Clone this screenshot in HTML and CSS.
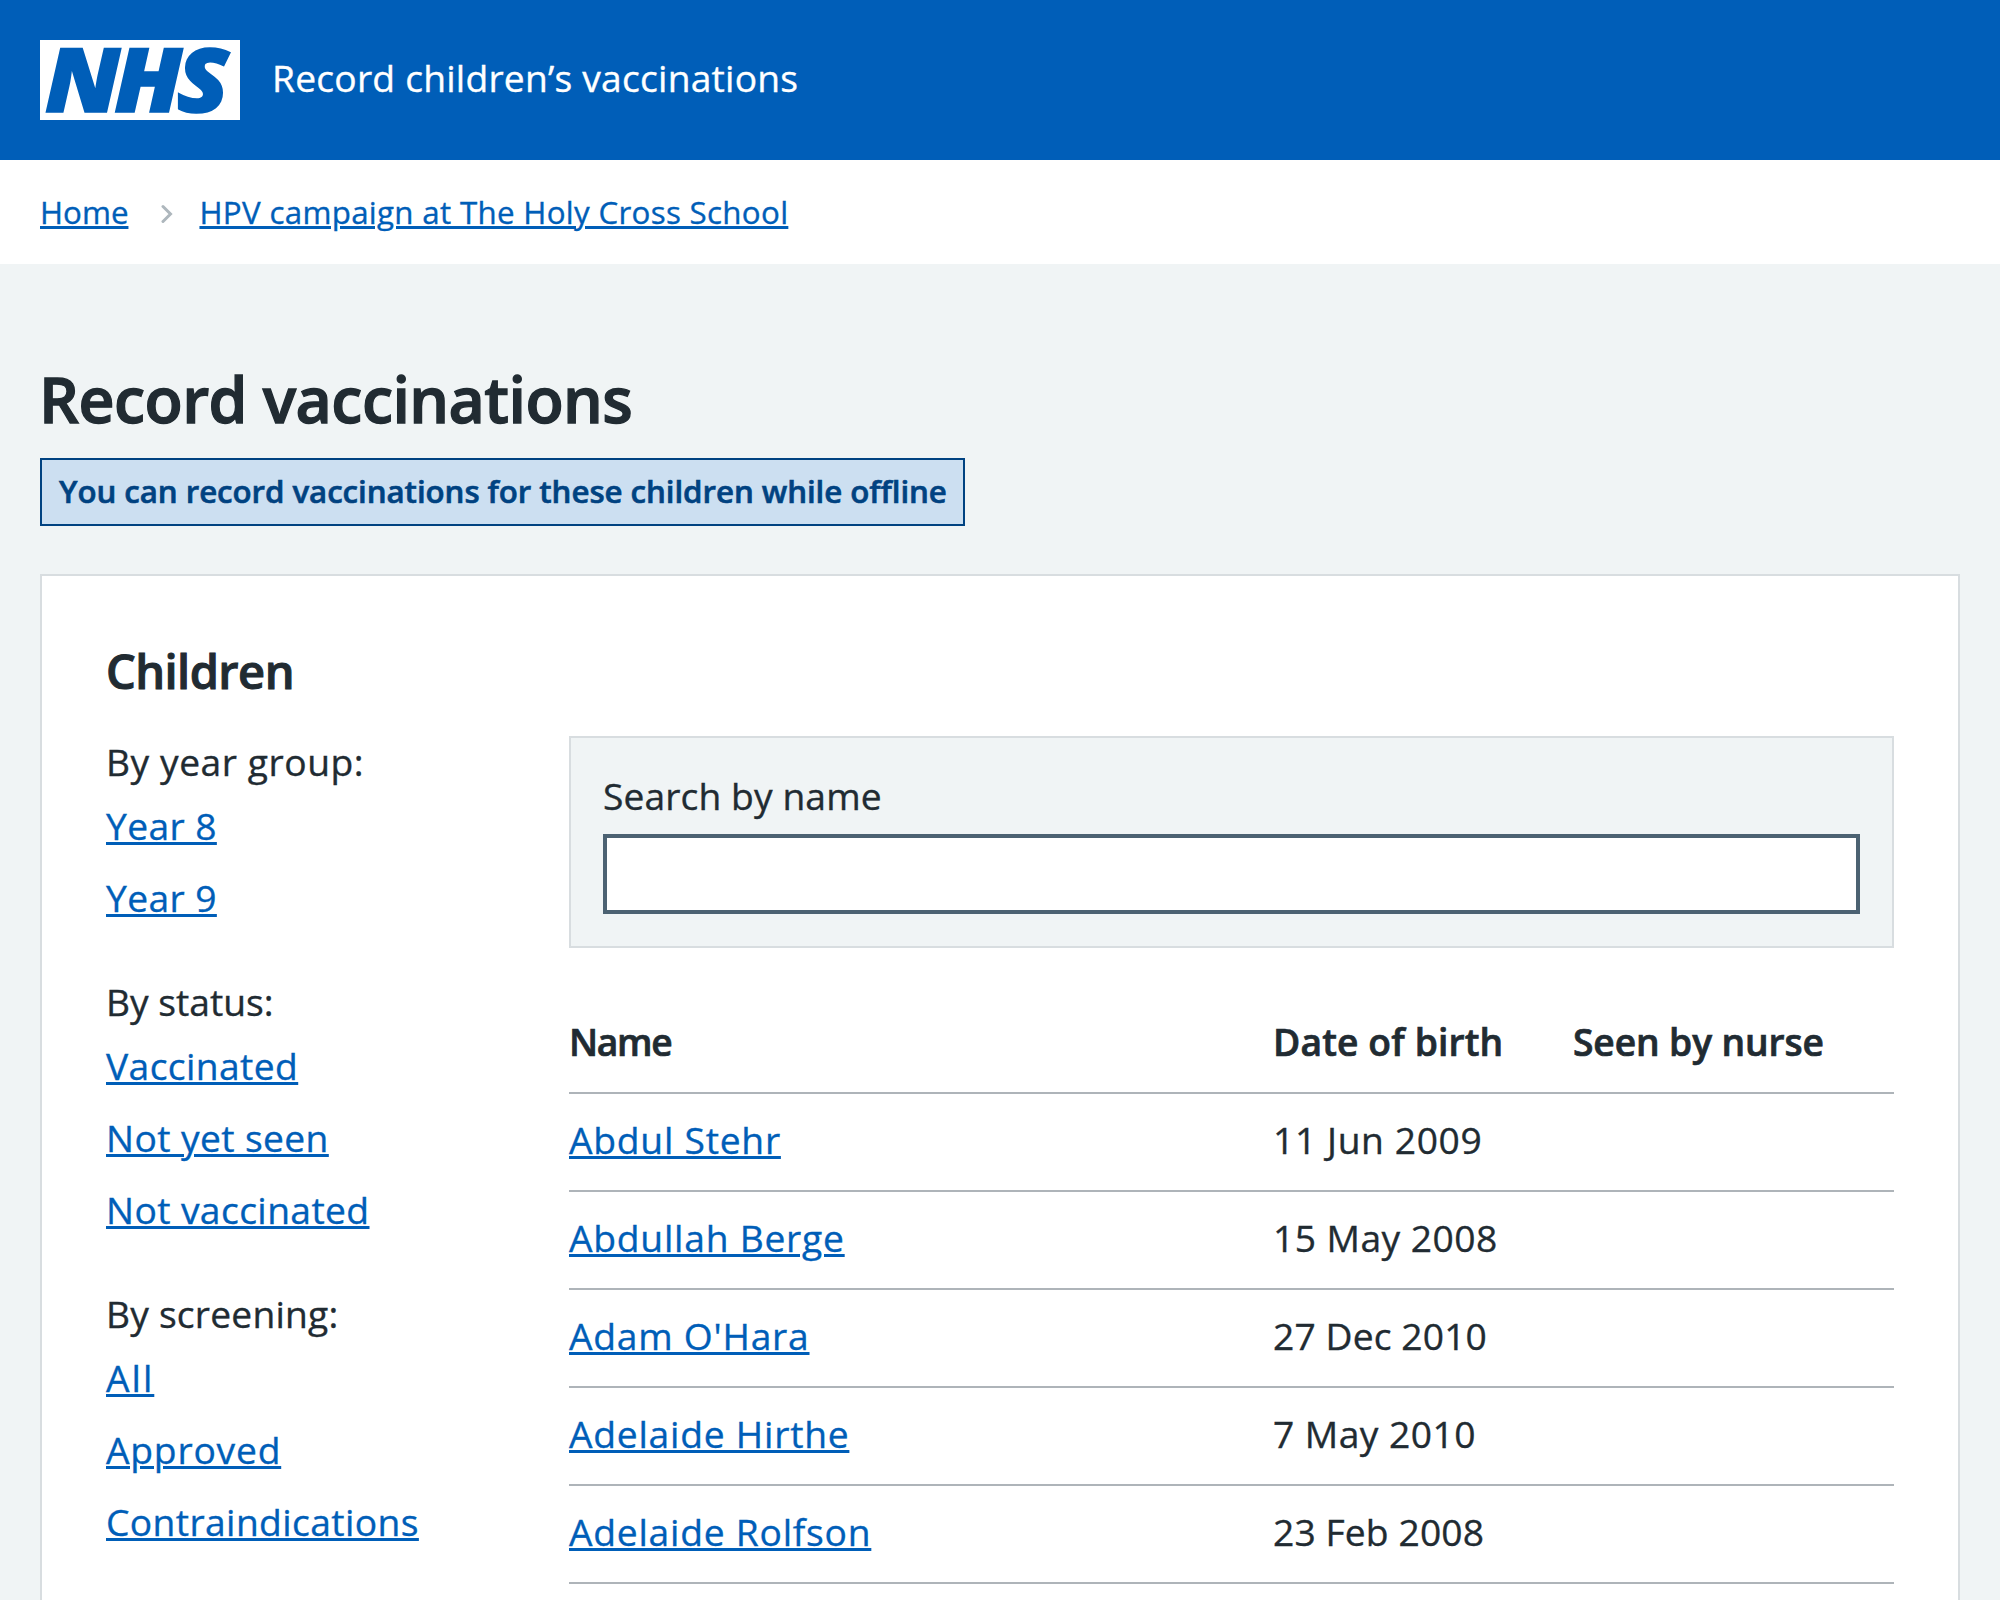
FILE: index.html
```html
<!DOCTYPE html>
<html lang="en">
<head>
<meta charset="utf-8">
<title>Record vaccinations</title>
<link rel="stylesheet" href="styles.css">
</head>
<body>
<header class="header">
  <svg class="logo" width="200" height="80" viewBox="0 0 200 80" role="img" aria-label="NHS">
    <rect width="200" height="80" fill="#fff"/>
    <text class="logo-text" x="4.6 69.3 127.8" y="72" transform="scale(1.07 1)">NHS</text>
  </svg>
  <span class="service-name">Record children’s vaccinations</span>
</header>
<nav class="breadcrumb">
  <a class="link" href="#">Home</a>
  <svg class="chevron" width="12" height="20" viewBox="0 0 12 20"><path d="M2 2.5 9.5 10 2 17.5"/></svg>
  <a class="link crumb-current" href="#">HPV campaign at The Holy Cross School</a>
</nav>
<main class="main">
  <h1 class="title">Record vaccinations</h1>
  <strong class="tag">You can record vaccinations for these children while offline</strong>
  <section class="card">
    <h2 class="card-title">Children</h2>
    <div class="columns">
      <aside class="filters">
        <div class="filter">
          <p class="filter-label group-year">By year group:</p>
          <ul class="filter-list">
            <li><a class="link" href="#">Year 8</a></li>
            <li><a class="link" href="#">Year 9</a></li>
          </ul>
        </div>
        <div class="filter">
          <p class="filter-label">By status:</p>
          <ul class="filter-list">
            <li><a class="link" href="#">Vaccinated</a></li>
            <li><a class="link" href="#">Not yet seen</a></li>
            <li><a class="link" href="#">Not vaccinated</a></li>
          </ul>
        </div>
        <div class="filter">
          <p class="filter-label group-screening">By screening:</p>
          <ul class="filter-list">
            <li><a class="link spaced-wide" href="#">All</a></li>
            <li><a class="link spaced" href="#">Approved</a></li>
            <li><a class="link" href="#">Contraindications</a></li>
          </ul>
        </div>
      </aside>
      <div class="results">
        <form class="search">
          <label class="search-label" for="name">Search by name</label>
          <input class="search-input" id="name" type="text">
        </form>
        <table class="table">
          <colgroup><col class="col-name"><col class="col-dob"><col></colgroup>
          <thead>
            <tr><th class="head-name">Name</th><th class="head-dob">Date of birth</th><th>Seen by nurse</th></tr>
          </thead>
          <tbody>
            <tr><td><a class="link" href="#">Abdul Stehr</a></td><td class="date-open">11 Jun 2009</td><td></td></tr>
            <tr><td><a class="link" href="#">Abdullah Berge</a></td><td class="date-mid">15 May 2008</td><td></td></tr>
            <tr><td><a class="link" href="#">Adam O'Hara</a></td><td>27 Dec 2010</td><td></td></tr>
            <tr><td><a class="link" href="#">Adelaide Hirthe</a></td><td class="date-mid">7 May 2010</td><td></td></tr>
            <tr><td><a class="link" href="#">Adelaide Rolfson</a></td><td>23 Feb 2008</td><td></td></tr>
          </tbody>
        </table>
      </div>
    </div>
  </section>
</main>
</body>
</html>
```
FILE: styles.css
```css
* { box-sizing: border-box; }

body {
  display: flex;
  flex-direction: column;
  margin: 0;
  height: 1600px;
  background: #f0f4f5;
  color: #212b32;
  font: 400 37.2px/56px "Open Sans", "Noto Sans", sans-serif;
  -webkit-text-stroke: 0.35px;
}

.link {
  color: #005eb8;
  text-decoration: underline;
  text-decoration-thickness: 3px;
  text-underline-offset: 2px;
}

.header {
  display: flex;
  flex: none;
  height: 160px;
  padding: 40px;
  background: #005eb8;
}

.logo { display: block; flex: none; overflow: visible; }

.logo-text {
  fill: #005eb8;
  stroke: #005eb8;
  stroke-width: 1.6;
  font: italic 800 89px "Open Sans", sans-serif;
  -webkit-text-stroke: 1.6px #005eb8;
}

.service-name {
  margin: 10px 0 0 32px;
  color: #fff;
  letter-spacing: 0.22px;
  white-space: nowrap;
}

.breadcrumb {
  display: flex;
  flex: none;
  height: 104px;
  padding: 28px 40px;
  background: #fff;
  font-size: 31.3px;
  line-height: 48px;
}

.chevron {
  flex: none;
  margin: 16px 26px 0 33px;
  fill: none;
  stroke: #aeb7bd;
  stroke-width: 3;
  stroke-linecap: round;
}

.crumb-current { letter-spacing: 0.31px; }

.main {
  display: flex;
  flex: 1;
  flex-direction: column;
  min-height: 0;
  padding: 99px 40px 0;
}

.title {
  margin: 0 0 23px -1px;
  font-size: 62.6px;
  line-height: 72px;
  font-weight: 600;
  letter-spacing: -0.55px;
  -webkit-text-stroke: 1.3px;
}

.tag {
  display: block;
  width: 925px;
  margin-bottom: 48px;
  padding: 15px 0 17px 17px;
  border: 2px solid #004281;
  background: #ccdff1;
  color: #004281;
  font-size: 31.3px;
  line-height: 32px;
  font-weight: 600;
  letter-spacing: -0.08px;
  white-space: nowrap;
  -webkit-text-stroke: 0.6px;
}

.card {
  flex: 1;
  min-height: 0;
  padding: 63px 64px 0;
  border: 2px solid #d8dde0;
  border-bottom: 0;
  background: #fff;
}

.card-title {
  margin: 0 0 31px;
  font-size: 47px;
  line-height: 64px;
  font-weight: 600;
  letter-spacing: -0.55px;
  -webkit-text-stroke: 1px;
}

.columns { display: flex; }

.filters {
  display: flex;
  flex: none;
  flex-direction: column;
  gap: 48px;
  width: 463px;
}

.filter-label { margin: 0 0 8px; }

.group-year { letter-spacing: 0.55px; }

.group-screening { letter-spacing: 0.2px; }

.filter-list {
  display: flex;
  flex-direction: column;
  gap: 16px;
  margin: 0;
  padding: 0;
  list-style: none;
  letter-spacing: 0.4px;
}

.spaced { letter-spacing: 0.8px; }

.spaced-wide { letter-spacing: 2px; }

.results { flex: 1; padding-top: 2px; }

.search {
  padding: 30px 32px 32px;
  border: 2px solid #d8dde0;
  background: #f0f4f5;
}

.search-label {
  display: block;
  margin-bottom: 10px;
  letter-spacing: 0.1px;
}

.search-input {
  display: block;
  width: 100%;
  height: 80px;
  border: 4px solid #4c6272;
  border-radius: 0;
  background: #fff;
}

.table {
  width: 100%;
  margin-top: 48px;
  border-spacing: 0;
  table-layout: fixed;
  text-align: left;
}

.col-name { width: 704px; }

.col-dob { width: 300px; }

.table th,
.table td {
  padding: 18px 0 22px;
  border-bottom: 2px solid #aeb4b9;
  white-space: nowrap;
}

.table th {
  font-weight: 600;
  letter-spacing: -0.1px;
  -webkit-text-stroke: 0.7px;
}

.table .head-name { letter-spacing: -1.3px; }

.table .head-dob { letter-spacing: 0.15px; }

.table td { letter-spacing: 0.12px; }

.table td .link { letter-spacing: 0.77px; }

.table .date-open { letter-spacing: 0.62px; }

.table .date-mid { letter-spacing: 0.45px; }
```
